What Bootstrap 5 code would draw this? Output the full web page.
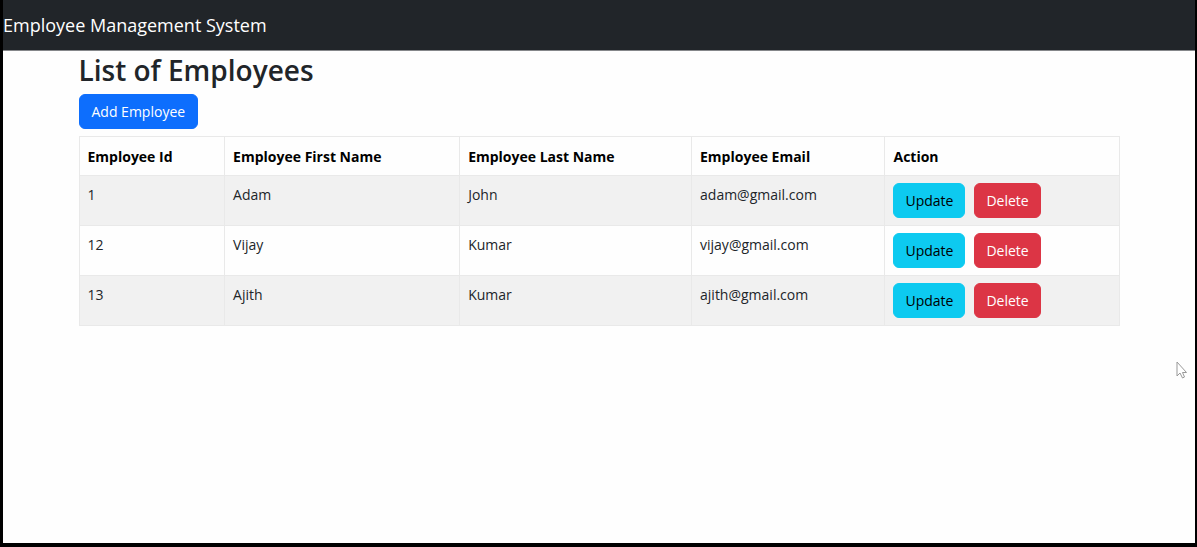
<!DOCTYPE html>
<html lang="en">
<head>
<meta charset="utf-8">
<meta name="viewport" content="width=device-width, initial-scale=1">
<title>Employee Management System</title>
<link href="https://cdn.jsdelivr.net/npm/bootstrap@5.3.0/dist/css/bootstrap.min.css" rel="stylesheet">
<style>
  body { font-family: "Open Sans", "Noto Sans", sans-serif; font-size: 14px; line-height: 22px; }
  .app-frame { border: solid #000; border-width: 0 2px 4px 3px; background: #fefefe; }
  .app-bar { --bs-navbar-padding-y: 8px; min-height: 51px; background: #212529; border-bottom: 1px solid #85878a; }
  .app-bar .navbar-brand { font-size: 18px; line-height: 26px; padding: 4px 0; margin: 0; }
  .app-main { max-width: 1065px; }
  .page-title { font-size: 28px; line-height: 36px; font-weight: 600; margin: 1px 0 6px; }
  .btn { --bs-btn-font-size: 14px; --bs-btn-line-height: 23px; --bs-btn-padding-x: 11px; --bs-btn-padding-y: 5px; }
  .btn-add { --bs-btn-padding-x: 12px; margin-bottom: 7px; }
  .btn-delete { margin-left: 9px; }
  .employee-table { --bs-table-striped-bg: #f1f1f1; --bs-table-border-color: #e9e9e9; border-color: #e9e9e9; table-layout: fixed; }
  .employee-table > :not(caption) > * > * { padding: 7px 8px; }
  .employee-table > thead > tr > th { padding-top: 8px; line-height: 23px; color: #000; }
  .employee-table td { line-height: 24px; }
  .col-id { width: 14%; }
  .col-first { width: 22.6%; }
  .col-last { width: 22.3%; }
  .col-email { width: 18.6%; }
  .pointer { position: absolute; right: 8px; bottom: 164px; }
</style>
</head>
<body>
<div class="app-frame min-vh-100 position-relative">
  <header>
    <nav class="navbar navbar-dark app-bar">
      <a class="navbar-brand" href="#">Employee Management System</a>
    </nav>
  </header>
  <main class="container app-main">
    <h2 class="page-title">List of Employees</h2>
    <a class="btn btn-primary btn-add" href="#">Add Employee</a>
    <table class="table table-bordered table-striped employee-table">
      <thead>
        <tr>
          <th class="col-id">Employee Id</th>
          <th class="col-first">Employee First Name</th>
          <th class="col-last">Employee Last Name</th>
          <th class="col-email">Employee Email</th>
          <th>Action</th>
        </tr>
      </thead>
      <tbody>
        <tr>
          <td>1</td><td>Adam</td><td>John</td><td>adam@gmail.com</td>
          <td><div class="d-flex"><a class="btn btn-info" href="#">Update</a><button type="button" class="btn btn-danger btn-delete">Delete</button></div></td>
        </tr>
        <tr>
          <td>12</td><td>Vijay</td><td>Kumar</td><td>vijay@gmail.com</td>
          <td><div class="d-flex"><a class="btn btn-info" href="#">Update</a><button type="button" class="btn btn-danger btn-delete">Delete</button></div></td>
        </tr>
        <tr>
          <td>13</td><td>Ajith</td><td>Kumar</td><td>ajith@gmail.com</td>
          <td><div class="d-flex"><a class="btn btn-info" href="#">Update</a><button type="button" class="btn btn-danger btn-delete">Delete</button></div></td>
        </tr>
      </tbody>
    </table>
  </main>
  <svg class="pointer" width="11" height="18" viewBox="0 0 11 18" aria-hidden="true">
    <path d="M1 1v14l3-3 2.500 5 2-1-2-4.500h4z" fill="#fff" stroke="#999" stroke-width="1"/>
  </svg>
</div>
<script src="https://cdn.jsdelivr.net/npm/bootstrap@5.3.0/dist/js/bootstrap.bundle.min.js"></script>
</body>
</html>
